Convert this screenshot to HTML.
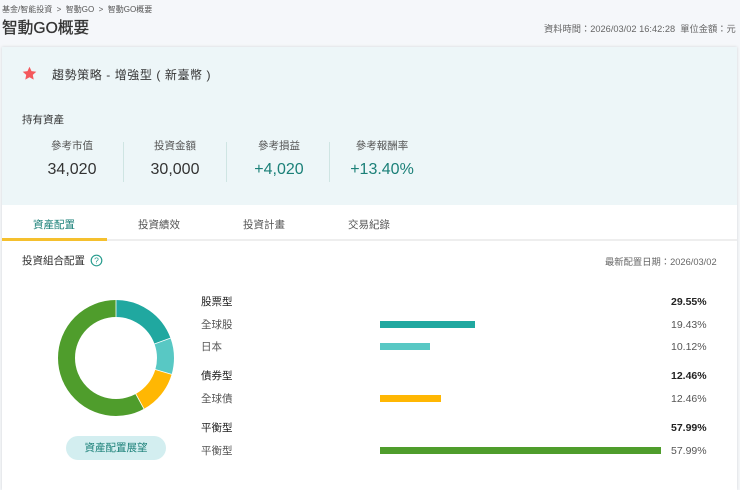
<!DOCTYPE html>
<html lang="zh-Hant">
<head>
<meta charset="utf-8">
<style>
html,body{margin:0;padding:0;}
body{width:740px;height:490px;overflow:hidden;background:#f5f7fa;position:relative;font-family:"Liberation Sans","Noto Sans CJK TC",sans-serif;color:#333;filter:blur(.3px);}
.a{position:absolute;white-space:nowrap;line-height:1;}
.c{transform:translateX(-50%);}
.bar{position:absolute;height:7px;left:380px;}
.g{color:#555;font-size:10.5px;}
.b{color:#222;font-size:10.5px;}
.pg{left:671px;font-size:10.500px;color:#222;font-weight:bold;}
.pn{left:671px;font-size:10.500px;color:#555;}
</style>
</head>
<body>
<div class="a" style="left:2px;top:6px;font-size:8px;color:#555;">基金/智能投資&nbsp;&nbsp;&gt;&nbsp;&nbsp;智動GO&nbsp;&nbsp;&gt;&nbsp;&nbsp;智動GO概要</div>
<div class="a" style="left:2px;top:21px;font-size:15.7px;color:#333;-webkit-text-stroke:.3px #333;">智動GO概要</div>
<div class="a" style="left:544px;top:25px;font-size:9.25px;color:#666;">資料時間：2026/03/02 16:42:28&nbsp;&nbsp;單位金額：元</div>

<div style="position:absolute;left:2px;top:47px;width:735px;height:443px;background:#fff;box-shadow:0 0 3px rgba(0,0,0,.14);"></div>
<div style="position:absolute;left:2px;top:47px;width:735px;height:158px;background:#edf6f8;"></div>

<svg style="position:absolute;left:22px;top:66px" width="15" height="15" viewBox="0 0 15 15"><path d="M7.5 .8l2 4.300 4.800.6-3.500 3.200 .9 4.700-4.200-2.400-4.200 2.400 .9-4.700L.7 5.700l4.800-.6z" fill="#f4585c"/></svg>
<div class="a" style="left:52px;top:69px;font-size:12px;letter-spacing:.58px;color:#333;">趨勢策略 - 增強型 ( 新臺幣 )</div>

<div class="a" style="left:22px;top:115px;font-size:10.5px;color:#333;">持有資產</div>

<div class="a c" style="left:72px;top:141px;font-size:10.5px;color:#555;">參考市值</div>
<div class="a c" style="left:72px;top:162px;font-size:16px;color:#333;">34,020</div>
<div class="a c" style="left:175px;top:141px;font-size:10.5px;color:#555;">投資金額</div>
<div class="a c" style="left:175px;top:162px;font-size:16px;color:#333;">30,000</div>
<div class="a c" style="left:279px;top:141px;font-size:10.5px;color:#555;">參考損益</div>
<div class="a c" style="left:279px;top:162px;font-size:16px;color:#1b8078;">+4,020</div>
<div class="a c" style="left:382px;top:141px;font-size:10.5px;color:#555;">參考報酬率</div>
<div class="a c" style="left:382px;top:162px;font-size:16px;color:#1b8078;">+13.40%</div>
<div style="position:absolute;left:123px;top:142px;width:1px;height:40px;background:#cfe5e3;"></div>
<div style="position:absolute;left:226px;top:142px;width:1px;height:40px;background:#cfe5e3;"></div>
<div style="position:absolute;left:329px;top:142px;width:1px;height:40px;background:#cfe5e3;"></div>

<div class="a c" style="left:54px;top:220px;font-size:10.5px;color:#1b8078;">資產配置</div>
<div class="a c" style="left:159px;top:220px;font-size:10.5px;color:#555;">投資績效</div>
<div class="a c" style="left:264px;top:220px;font-size:10.5px;color:#555;">投資計畫</div>
<div class="a c" style="left:369px;top:220px;font-size:10.5px;color:#555;">交易紀錄</div>
<div style="position:absolute;left:2px;top:239px;width:735px;height:2px;background:#eeeeee;"></div>
<div style="position:absolute;left:2px;top:238px;width:105px;height:3px;background:#f5c02e;"></div>

<div class="a" style="left:22px;top:256px;font-size:10.5px;color:#333;">投資組合配置</div>
<svg style="position:absolute;left:90px;top:254px" width="13" height="13" viewBox="0 0 13 13"><circle cx="6.500" cy="6.500" r="5.300" fill="none" stroke="#2a9d8f" stroke-width="1.200"/><text x="6.500" y="9.500" font-size="8.500" text-anchor="middle" fill="#2a9d8f" font-family="Liberation Sans">?</text></svg>
<div class="a" style="left:605px;top:258px;font-size:9.3px;color:#666;">最新配置日期：2026/03/02</div>

<svg style="position:absolute;left:56px;top:298px" width="120" height="120" viewBox="0 0 120 120">
<g fill="none" stroke-width="17" transform="rotate(-90 60 60)">
<circle cx="60" cy="60" r="49.500" pathLength="100" stroke="#20a8a0" stroke-dasharray="19.430 80.570" stroke-dashoffset="0"/>
<circle cx="60" cy="60" r="49.500" pathLength="100" stroke="#58c8c4" stroke-dasharray="10.120 89.880" stroke-dashoffset="-19.430"/>
<circle cx="60" cy="60" r="49.500" pathLength="100" stroke="#ffb703" stroke-dasharray="12.460 87.540" stroke-dashoffset="-29.550"/>
<circle cx="60" cy="60" r="49.500" pathLength="100" stroke="#4f9d2c" stroke-dasharray="57.990 42.010" stroke-dashoffset="-42.010"/>
</g>
<g stroke="#fff" stroke-width=".8">
<line x1="60" y1="0" x2="60" y2="21"/>
<line x1="97.600" y1="46.200" x2="115.400" y2="39.700"/>
<line x1="98.400" y1="71.300" x2="116.600" y2="76.600"/>
<line x1="79.300" y1="95" x2="88.400" y2="111.700"/>
</g>
</svg>

<div style="position:absolute;left:66px;top:436px;width:100px;height:24px;border-radius:12px;background:#d3eef0;"></div>
<div class="a c" style="left:116px;top:443px;font-size:10.5px;color:#1b8078;">資產配置展望</div>

<div class="a b" style="left:201px;top:297px;">股票型</div>
<div class="a g" style="left:201px;top:320px;">全球股</div>
<div class="a g" style="left:201px;top:342px;">日本</div>
<div class="a b" style="left:201px;top:371px;">債券型</div>
<div class="a g" style="left:201px;top:394px;">全球債</div>
<div class="a b" style="left:201px;top:423px;">平衡型</div>
<div class="a g" style="left:201px;top:446px;">平衡型</div>

<div class="bar" style="top:321px;width:95px;background:#20a8a0;"></div>
<div class="bar" style="top:343px;width:50px;background:#58c8c4;"></div>
<div class="bar" style="top:395px;width:61px;background:#ffb703;"></div>
<div class="bar" style="top:447px;width:281px;background:#4f9d2c;"></div>

<div class="a pg" style="top:297px;">29.55%</div>
<div class="a pn" style="top:320px;">19.43%</div>
<div class="a pn" style="top:342px;">10.12%</div>
<div class="a pg" style="top:371px;">12.46%</div>
<div class="a pn" style="top:394px;">12.46%</div>
<div class="a pg" style="top:423px;">57.99%</div>
<div class="a pn" style="top:446px;">57.99%</div>
</body>
</html>
